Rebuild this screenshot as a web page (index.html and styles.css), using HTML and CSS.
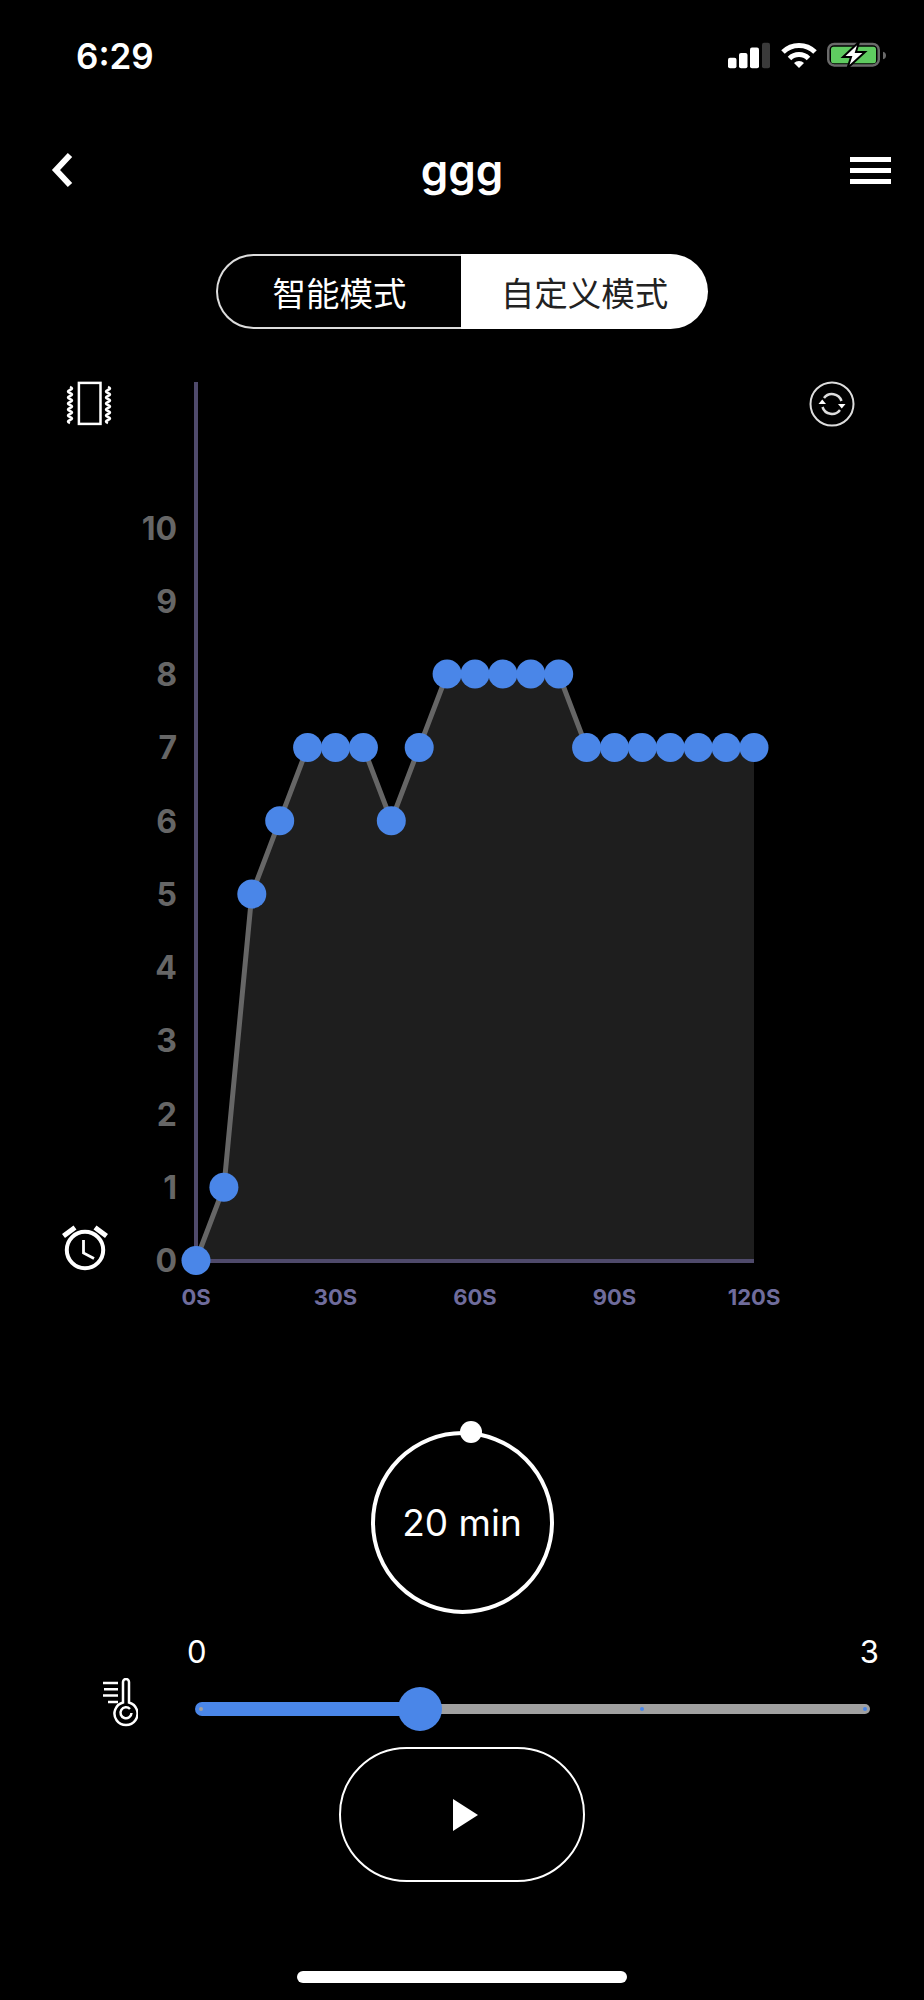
FILE: index.html
```html
<!DOCTYPE html>
<html lang="zh">
<head>
<meta charset="utf-8">
<title>ggg</title>
<link rel="stylesheet" href="styles.css">
</head>
<body>
<main class="page">
  <header class="status">
    <span class="time">6:29</span>
    <div class="status-icons">
      <svg class="signal" width="42" height="28" viewBox="0 0 42 28">
        <rect x="0" y="16.700" width="8.500" height="10.600" rx="2" fill="#fff"/>
        <rect x="11" y="12" width="8.500" height="15.300" rx="2" fill="#fff"/>
        <rect x="22" y="6.500" width="9" height="20.800" rx="2" fill="#fff"/>
        <rect x="34" y="1.700" width="8" height="25.600" rx="2" fill="#3a3a3a"/>
      </svg>
      <svg class="wifi" width="36" height="28" viewBox="0 0 36 28">
        <path d="M2 11A22.700 22.700 0 0 1 34 11" fill="none" stroke="#fff" stroke-width="5"/>
        <path d="M8.500 17.500A13.500 13.500 0 0 1 27.500 17.500" fill="none" stroke="#fff" stroke-width="5"/>
        <path d="M18 27L13 22A7 7 0 0 1 23 22z" fill="#fff"/>
      </svg>
      <svg class="battery" width="60" height="28" viewBox="0 0 60 28">
        <rect x="1.250" y="2.950" width="50.500" height="21.500" rx="6" fill="none" stroke="#6a6a6a" stroke-width="2.500"/>
        <rect x="4" y="5.700" width="45" height="16.600" rx="2.500" fill="#5fcb60"/>
        <path d="M56 10.700v7.600a4 4 0 0 0 3-3.800 4 4 0 0 0-3-3.800z" fill="#6a6a6a"/>
        <path d="M32 1L16 16h8l-3.500 11L38 11h-9z" fill="#fff" stroke="#000" stroke-width="2"/>
      </svg>
    </div>
  </header>

  <nav class="nav">
    <svg class="back" width="24" height="36" viewBox="0 0 24 36">
      <path d="M20 3L6 18l14 15" fill="none" stroke="#fff" stroke-width="6"/>
    </svg>
    <h1 class="title">ggg</h1>
    <div class="menu"><span class="menu-line"></span><span class="menu-line"></span><span class="menu-line"></span></div>
  </nav>

  <div class="segment">
    <div class="seg-item seg-dark">智能模式</div>
    <div class="seg-item seg-light">自定义模式</div>
  </div>

  <svg class="chart" width="924" height="950" viewBox="0 370 924 950">
    <!-- vibration icon -->
    <g fill="none" stroke="#fff" stroke-width="2.500">
      <rect x="78.900" y="382.900" width="21.600" height="41"/>
      <path d="M70 387q4 1.500 0 3t0 3 0 3 0 3 0 3 0 3 0 3 0 3 0 3 0 3 0 3 0 3"/>
      <path d="M108 387q4 1.500 0 3t0 3 0 3 0 3 0 3 0 3 0 3 0 3 0 3 0 3 0 3 0 3"/>
    </g>
    <!-- refresh icon -->
    <g fill="none" stroke="#ddd">
      <circle cx="832" cy="404" r="21.500" stroke-width="2"/>
      <path d="M824 398A10 10 0 0 1 841.500 401" stroke-width="2.500"/>
      <path d="M840 410A10 10 0 0 1 822.500 407" stroke-width="2.500"/>
    </g>
    <path d="M838 404h7.500l-3.750 4.500z" fill="#fff"/>
    <path d="M818.500 404h7.500l-3.750-4.500z" fill="#fff"/>
    <!-- alarm icon -->
    <g fill="none" stroke="#fff">
      <circle cx="85" cy="1250" r="18.200" stroke-width="4"/>
      <path d="M83.500 1240v13l10.500 5.500" stroke-width="2.800"/>
      <path d="M63.500 1236l11.500-8.500M106.500 1236l-11.500-8.500" stroke-width="5"/>
    </g>

    <!-- area, axes -->
    <polygon class="area" points="196,1260.500 223.900,1187.200 251.800,894 279.700,820.700 307.600,747.400 335.500,747.400 363.400,747.400 391.300,820.700 419.200,747.400 447.100,674.100 475,674.100 502.900,674.100 530.800,674.100 558.700,674.100 586.600,747.400 614.500,747.400 642.400,747.400 670.300,747.400 698.200,747.400 726.100,747.400 754,747.400 754,1260.500"/>
    <path class="axis" d="M196 382V1261H754"/>
    <polyline class="line" points="196,1260.500 223.900,1187.200 251.800,894 279.700,820.700 307.600,747.400 335.500,747.400 363.400,747.400 391.300,820.700 419.200,747.400 447.100,674.100 475,674.100 502.900,674.100 530.800,674.100 558.700,674.100 586.600,747.400 614.500,747.400 642.400,747.400 670.300,747.400 698.200,747.400 726.100,747.400 754,747.400"/>

    <!-- y labels -->
    <g class="ylabels">
      <text x="177" y="1272">0</text>
      <text x="177" y="1199">1</text>
      <text x="177" y="1125.500">2</text>
      <text x="177" y="1052">3</text>
      <text x="177" y="979">4</text>
      <text x="177" y="906">5</text>
      <text x="177" y="832.500">6</text>
      <text x="177" y="759">7</text>
      <text x="177" y="686">8</text>
      <text x="177" y="612.500">9</text>
      <text x="177" y="539.500">10</text>
    </g>
    <!-- x labels -->
    <g class="xlabels">
      <text x="196" y="1305">0S</text>
      <text x="335.500" y="1305">30S</text>
      <text x="475" y="1305">60S</text>
      <text x="614.500" y="1305">90S</text>
      <text x="754" y="1305">120S</text>
    </g>
    <!-- points -->
    <g class="dots">
      <circle cx="196" cy="1260.500" r="14.500"/><circle cx="223.900" cy="1187.200" r="14.500"/><circle cx="251.800" cy="894" r="14.500"/><circle cx="279.700" cy="820.700" r="14.500"/><circle cx="307.600" cy="747.400" r="14.500"/><circle cx="335.500" cy="747.400" r="14.500"/><circle cx="363.400" cy="747.400" r="14.500"/><circle cx="391.300" cy="820.700" r="14.500"/><circle cx="419.200" cy="747.400" r="14.500"/><circle cx="447.100" cy="674.100" r="14.500"/><circle cx="475" cy="674.100" r="14.500"/><circle cx="502.900" cy="674.100" r="14.500"/><circle cx="530.800" cy="674.100" r="14.500"/><circle cx="558.700" cy="674.100" r="14.500"/><circle cx="586.600" cy="747.400" r="14.500"/><circle cx="614.500" cy="747.400" r="14.500"/><circle cx="642.400" cy="747.400" r="14.500"/><circle cx="670.300" cy="747.400" r="14.500"/><circle cx="698.200" cy="747.400" r="14.500"/><circle cx="726.100" cy="747.400" r="14.500"/><circle cx="754" cy="747.400" r="14.500"/>
    </g>
  </svg>

  <div class="timer">
    <span class="timer-text">20 min</span>
    <span class="timer-handle"></span>
  </div>

  <section class="slider">
    <div class="slider-labels"><span>0</span><span>3</span></div>
    <div class="slider-row">
      <svg class="thermo" width="36" height="62" viewBox="102 1678 36 62">
        <path d="M123 1702.500V1682a3 3 0 0 1 6 0v20.500a11.500 11.500 0 1 1-6 0z" fill="none" stroke="#fff" stroke-width="2.500"/>
        <path d="M130 1709a5.500 5.500 0 1 0 1.500 4" fill="none" stroke="#fff" stroke-width="2.500"/>
        <path d="M103 1683h15M104 1689.300h14M103 1695.500h15M108 1702h10" stroke="#fff" stroke-width="2.500"/>
      </svg>
      <div class="track">
        <div class="track-fill"></div>
        <div class="track-rest"></div>
        <span class="tick tick-start"></span>
        <span class="tick tick-mid"></span>
        <span class="tick tick-end"></span>
        <span class="thumb"></span>
      </div>
    </div>
  </section>

  <button class="play" type="button" aria-label="play"><span class="play-icon"></span></button>

  <div class="home"></div>
</main>
</body>
</html>
```
FILE: styles.css
```css
* { box-sizing: border-box; }
html, body { margin: 0; padding: 0; background: #000; }
body { font-family: "Liberation Sans", "Noto Sans CJK SC", sans-serif; color: #fff; }

.page { width: 924px; height: 2000px; background: #000; display: flex; flex-direction: column; align-items: center; }

.status { width: 100%; height: 120px; padding: 36px 37px 0 76px; display: flex; justify-content: space-between; align-items: flex-start; }
.time { font-family: Inter, sans-serif; font-weight: 600; font-size: 35px; line-height: 40px; }
.status-icons { display: flex; align-items: center; gap: 10.500px; padding-top: 5px; }

.nav { width: 100%; height: 100px; padding: 0 33px 0 50px; display: flex; justify-content: space-between; align-items: center; position: relative; }
.title { position: absolute; left: 0; right: 0; margin: 0; text-align: center; font-weight: 600; font-size: 44px; line-height: 100px; font-family: Inter, sans-serif; }
.menu { display: flex; flex-direction: column; gap: 6px; width: 41px; }
.menu-line { display: block; height: 5px; background: #fff; }

.segment { margin-top: 34px; width: 492px; height: 75px; display: flex; }
.seg-item { display: flex; align-items: center; justify-content: center; font-family: "Noto Sans CJK SC", sans-serif; font-size: 33.500px; line-height: 1; }
.seg-dark { width: 245px; background: #000; color: #fff; border: 2px solid #ddd; border-right: none; border-radius: 37.500px 0 0 37.500px; }
.seg-light { width: 247px; background: #fff; color: #222; border-radius: 0 37.500px 37.500px 0; }

.chart { display: block; margin-top: 41px; flex: none; }
.area { fill: #1e1e1e; }
.axis { fill: none; stroke: #4f4a6b; stroke-width: 4; }
.line { fill: none; stroke: #666; stroke-width: 5; }
.dots circle { fill: #4a86e8; }
.ylabels text { font-family: Inter, sans-serif; font-weight: 700; font-size: 32px; fill: #666; text-anchor: end; }
.xlabels text { font-family: Inter, sans-serif; font-weight: 700; font-size: 22px; fill: #6f6c9c; text-anchor: middle; }

.timer { position: relative; margin-top: 111px; width: 183px; height: 183px; border: 4px solid #fff; border-radius: 50%; display: flex; align-items: center; justify-content: center; flex: none; }
.timer-text { font-family: Inter, sans-serif; font-size: 37px; line-height: 1; }
.timer-handle { position: absolute; top: -14px; left: 85.500px; width: 22px; height: 22px; border-radius: 50%; background: #fff; }

.slider { width: 100%; margin-top: 20px; }
.slider-labels { display: flex; justify-content: space-between; padding: 0 45px 0 187px; font-family: Inter, sans-serif; font-size: 31px; line-height: 36px; }
.slider-row { display: flex; align-items: center; padding-left: 102px; margin-top: 15px; height: 48px; }
.thermo { flex: none; }
.track { position: relative; margin-left: 57px; width: 675px; height: 14px; display: flex; align-items: center; }
.track-fill { width: 225px; height: 14px; border-radius: 7px 0 0 7px; background: #4a86e8; }
.track-rest { flex: 1; height: 10px; border-radius: 0 5px 5px 0; background: #a0a0a0; }
.tick { position: absolute; top: 5px; width: 4px; height: 4px; border-radius: 50%; }
.tick-start { left: 4px; background: #a0a0a0; }
.tick-mid { left: 445px; background: #4a86e8; }
.tick-end { left: 668px; background: #4a86e8; }
.thumb { position: absolute; left: 203px; top: -15px; width: 44px; height: 44px; border-radius: 50%; background: #4a86e8; }

.play { margin-top: 14px; width: 246px; height: 135px; background: #000; border: 2px solid #fff; border-radius: 67.500px; display: flex; align-items: center; justify-content: center; padding: 0; flex: none; }
.play-icon { display: block; margin-left: 6px; width: 0; height: 0; border-left: 25px solid #fff; border-top: 16px solid transparent; border-bottom: 16px solid transparent; }

.home { margin-top: 89px; width: 330px; height: 12px; border-radius: 6px; background: #fff; flex: none; }
```
